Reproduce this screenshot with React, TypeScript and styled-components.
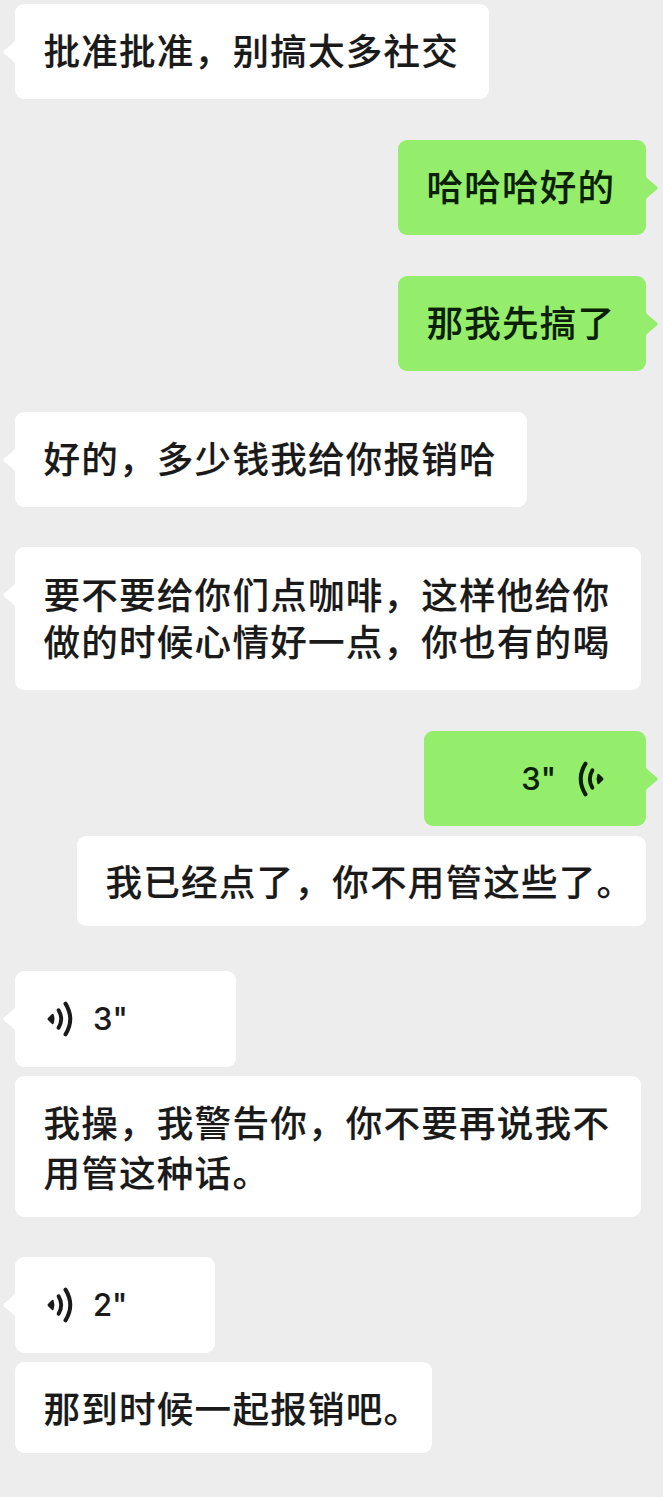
import React from 'react';
import styled, { createGlobalStyle, css } from 'styled-components';

const GlobalStyle = createGlobalStyle`
  body { margin: 0; background: #ededed; }
  * { box-sizing: border-box; }
`;

type Side = 'left' | 'right';
type Tone = 'white' | 'green';

const fills: Record<Tone, string> = { white: '#ffffff', green: '#95ed6c' };
const inks: Record<Tone, string> = { white: '#1a1a1a', green: '#0b1f04' };

const Chat = styled.main`
  display: flex;
  flex-direction: column;
  width: 663px;
  height: 1497px;
  padding: 4px 17px 0 15px;
  overflow: hidden;
  background: #ededed;
  font-family: 'Noto Sans CJK SC', sans-serif;
`;

const Row = styled.div<{ $side: Side; $gap: number }>`
  display: flex;
  justify-content: ${(p) => (p.$side === 'left' ? 'flex-start' : 'flex-end')};
  margin-bottom: ${(p) => p.$gap}px;
`;

const Bubble = styled.div<{ $tone: Tone; $width: number; $height: number }>`
  position: relative;
  display: flex;
  align-items: center;
  width: ${(p) => p.$width}px;
  height: ${(p) => p.$height}px;
  padding: 0 28.5px;
  border-radius: 9px;
  background: ${(p) => fills[p.$tone]};
  color: ${(p) => inks[p.$tone]};
`;

const Tail = styled.svg<{ $side: Side }>`
  position: absolute;
  top: 35px;
  width: 14px;
  height: 26px;
  ${(p) => (p.$side === 'left' ? css`left: -13px;` : css`right: -13px; transform: scaleX(-1);`)}
`;

const Text = styled.p<{ $line: number; $lift: number }>`
  margin: 0;
  padding-bottom: ${(p) => p.$lift * 2}px;
  font-size: 36.6px;
  font-weight: 500;
  line-height: ${(p) => p.$line}px;
  letter-spacing: 1.2px;
  white-space: pre;
  -webkit-text-stroke: 0.12px currentColor;
`;

const Voice = styled(Bubble)<{ $side: Side }>`
  flex-direction: ${(p) => (p.$side === 'left' ? 'row' : 'row-reverse')};
  padding: ${(p) => (p.$side === 'left' ? '0 32px' : '0 42px')};
  gap: ${(p) => (p.$side === 'left' ? 20 : 22)}px;
`;

const Duration = styled.span`
  font-family: Inter, 'Liberation Sans', sans-serif;
  font-size: 31px;
  font-weight: 500;
  line-height: 40px;
  -webkit-text-stroke: 0.12px currentColor;
`;

const Wave = styled.svg<{ $side: Side }>`
  flex: none;
  width: 26px;
  height: 36px;
  ${(p) => p.$side === 'right' && css`transform: scaleX(-1);`}
`;

const BubbleTail = ({ side, tone }: { side: Side; tone: Tone }) => (
  <Tail $side={side} viewBox="0 0 14 26" fill={fills[tone]}>
    <path d="M14 0 C13 2 11.5 3.5 9 5.8 L2 11.6 Q0.5 13 2 14.4 L9 20.2 C11.5 22.5 13 24 14 26 Z" />
  </Tail>
);

const SoundWave = ({ side }: { side: Side }) => (
  <Wave $side={side} viewBox="0 0 26 36" fill="none" stroke="currentColor" strokeLinecap="round">
    <path d="M.9 17.1 L5 13.1 Q6 12.4 6.6 13.6 Q8.3 18 6.6 22.4 Q6 23.6 5 22.9 L.9 18.9 Q.1 18 .9 17.1Z" fill="currentColor" stroke="none" />
    <path d="M11.6 9.2 Q16.8 18 11.6 26.8" strokeWidth="3.9" />
    <path d="M18.5 2.6 Q28 18 18.5 33.4" strokeWidth="4" />
  </Wave>
);

interface TextProps {
  side: Side;
  tone?: Tone;
  width: number;
  height?: number;
  gap?: number;
  line?: number;
  lift?: number;
  tail?: boolean;
  children: string;
}

const TextMessage = ({
  side, tone = 'white', width, height = 95, gap = 41, line = 47.5, lift = 2, tail = true, children,
}: TextProps) => (
  <Row $side={side} $gap={gap}>
    <Bubble $tone={tone} $width={width} $height={height}>
      {tail && <BubbleTail side={side} tone={tone} />}
      <Text $line={line} $lift={lift}>{children}</Text>
    </Bubble>
  </Row>
);

interface VoiceProps {
  side: Side;
  tone?: Tone;
  width: number;
  height?: number;
  gap: number;
  seconds: number;
}

const VoiceMessage = ({ side, tone = 'white', width, height = 96, gap, seconds }: VoiceProps) => (
  <Row $side={side} $gap={gap}>
    <Voice $side={side} $tone={tone} $width={width} $height={height}>
      <BubbleTail side={side} tone={tone} />
      <SoundWave side={side} />
      <Duration>{`${seconds}"`}</Duration>
    </Voice>
  </Row>
);

export default function App() {
  return (
    <>
      <GlobalStyle />
      <Chat lang="zh-CN">
        <TextMessage side="left" width={474}>批准批准，别搞太多社交</TextMessage>
        <TextMessage side="right" tone="green" width={248}>哈哈哈好的</TextMessage>
        <TextMessage side="right" tone="green" width={248}>那我先搞了</TextMessage>
        <TextMessage side="left" width={512} gap={40}>好的，多少钱我给你报销哈</TextMessage>
        <TextMessage side="left" width={626} height={143} lift={1.5}>
          {'要不要给你们点咖啡，这样他给你\n做的时候心情好一点，你也有的喝'}
        </TextMessage>
        <VoiceMessage side="right" tone="green" width={222} height={95} gap={10} seconds={3} />
        <TextMessage side="right" width={569} height={90} gap={45} lift={0} tail={false}>我已经点了，你不用管这些了。</TextMessage>
        <VoiceMessage side="left" width={221} gap={9} seconds={3} />
        <TextMessage side="left" width={626} height={141} gap={40} line={50} lift={0} tail={false}>
          {'我操，我警告你，你不要再说我不\n用管这种话。'}
        </TextMessage>
        <VoiceMessage side="left" width={200} gap={9} seconds={2} />
        <TextMessage side="left" width={417} height={91} gap={0} lift={0} tail={false}>那到时候一起报销吧。</TextMessage>
      </Chat>
    </>
  );
}
